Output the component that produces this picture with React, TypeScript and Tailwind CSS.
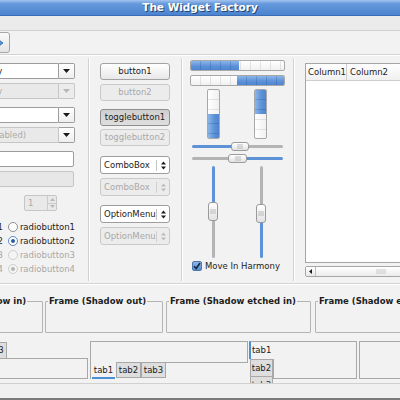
import React from 'react';

const dis = 'text-[#a9a9a9]';

function DownArrow({ c = '#1a1a1a' }: { c?: string }) {
  return (
    <svg width="7" height="4" viewBox="0 0 7 4">
      <path d="M0 0H7L3.5 4Z" fill={c} />
    </svg>
  );
}

function UpDown({ c = '#1a1a1a' }: { c?: string }) {
  return (
    <svg width="5" height="9" viewBox="0 0 5 9">
      <path d="M0 3.5H5L2.5 0.5Z M0 5.5H5L2.5 8.5Z" fill={c} />
    </svg>
  );
}

// combo with a separate arrow button (left column)
function EntryCombo({ text, off, arrowOff, pad }: { text: string; off?: boolean; arrowOff?: boolean; pad?: string }) {
  return (
    <div className="flex h-[16px]">
      <div
        className={`flex-1 flex items-center rounded-l-[2px] border ${pad ?? 'pl-[4px]'} ${
          off ? `bg-[#e9e9e9] border-[#c6c6c6] ${dis}` : 'bg-white border-[#9d9d9d]'
        }`}
      >
        {text}
      </div>
      <div
        className={`w-[16px] flex items-center justify-center rounded-r-[2px] border border-l-0 ${
          arrowOff ? 'bg-[#ececec] border-[#c6c6c6]' : 'bg-[linear-gradient(#ffffff,#eeeeee)] border-[#9d9d9d]'
        }`}
      >
        <DownArrow c={arrowOff ? '#b8b8b8' : '#1a1a1a'} />
      </div>
    </div>
  );
}

function Button({ text, off, pressed }: { text: string; off?: boolean; pressed?: boolean }) {
  let cls = 'border-[#a2a2a2] bg-[linear-gradient(#ffffff,#e8e8e8)]';
  if (off) cls = `border-[#cacaca] bg-[#ececec] ${dis}`;
  if (pressed) cls = 'border-[#8e8e8e] bg-[linear-gradient(#cfcfcf,#dedede)]';
  return (
    <div className={`h-[17px] rounded-[3px] border flex items-center justify-center ${cls}`}>{text}</div>
  );
}

function SpinCombo({ text, off }: { text: string; off?: boolean }) {
  return (
    <div
      className={`h-[18px] rounded-[3px] border flex items-center ${
        off ? `border-[#cacaca] bg-[#ececec] ${dis}` : 'border-[#9d9d9d] bg-white'
      }`}
    >
      <span className="flex-1 pl-[3px]">{text}</span>
      <div className={`w-px h-[11px] ${off ? 'bg-[#d0d0d0]' : 'bg-[#c4c4c4]'}`} />
      <div className="w-[12px] flex items-center justify-center">
        <UpDown c={off ? '#bbbbbb' : '#1a1a1a'} />
      </div>
    </div>
  );
}

function Radio({ on, off }: { on?: boolean; off?: boolean }) {
  return (
    <div
      className={`w-[10px] h-[10px] rounded-full border flex items-center justify-center ${
        off ? 'border-[#cfcfcf] bg-[#f4f4f4]' : on ? 'border-[#5b88c4] bg-white' : 'border-[#8e8e8e] bg-white'
      }`}
    >
      {on && <div className={`w-[4px] h-[4px] rounded-full ${off ? 'bg-[#b4b4b4]' : 'bg-[#2d5d9e]'}`} />}
    </div>
  );
}

function Thumb({ w, vertical }: { w: number; vertical?: boolean }) {
  return (
    <div
      className={`shrink-0 rounded-[3px] border border-[#9a9a9a] bg-[linear-gradient(#ffffff,#e2e2e2)] flex items-center justify-center ${
        vertical ? 'w-[10px]' : 'h-[9px]'
      }`}
      style={vertical ? { height: w } : { width: w }}
    >
      <div className="w-[6px] h-[5px] bg-[radial-gradient(#b5b5b5_0.6px,transparent_0.8px)] bg-[length:2px_2px]" />
    </div>
  );
}

function HScale({ left, thumb, blueLeft }: { left: number; thumb: number; blueLeft: boolean }) {
  return (
    <div className="h-[9px] ml-[2px] w-[91px] flex items-center">
      <div
        className={`h-[3px] rounded-l-full ${blueLeft ? 'bg-[#5d93d6]' : 'bg-[#b4b4b4]'}`}
        style={{ width: left }}
      />
      <Thumb w={thumb} />
      <div className={`flex-1 h-[3px] rounded-r-full ${blueLeft ? 'bg-[#b4b4b4]' : 'bg-[#5d93d6]'}`} />
    </div>
  );
}

function VScale({ top, blueTop }: { top: number; blueTop: boolean }) {
  return (
    <div className="w-[10px] h-[92px] flex flex-col items-center">
      <div className={`w-[3px] rounded-t-full ${blueTop ? 'bg-[#5d93d6]' : 'bg-[#b4b4b4]'}`} style={{ height: top }} />
      <Thumb w={19} vertical />
      <div className={`w-[3px] flex-1 rounded-b-full ${blueTop ? 'bg-[#b4b4b4]' : 'bg-[#5d93d6]'}`} />
    </div>
  );
}

const stripesH =
  'bg-[repeating-linear-gradient(90deg,transparent_0_9px,rgba(0,0,0,0.09)_9px_10px),linear-gradient(#ffffff,#f1f1f1)]';
const fillH =
  'bg-[repeating-linear-gradient(90deg,transparent_0_9px,rgba(0,40,120,0.18)_9px_10px),linear-gradient(#8cb6ea,#5a90d6_60%,#4f86d0)]';
const stripesV =
  'bg-[repeating-linear-gradient(180deg,transparent_0_9px,rgba(0,0,0,0.09)_9px_10px),linear-gradient(90deg,#ffffff,#f1f1f1)]';
const fillV =
  'bg-[repeating-linear-gradient(180deg,transparent_0_9px,rgba(0,40,120,0.18)_9px_10px),linear-gradient(90deg,#8cb6ea,#5a90d6_60%,#4f86d0)]';

function VSep() {
  return <div className="self-stretch my-[2px] w-[2px] border-l border-[#d2d2d2] bg-white shrink-0" />;
}

function Frame({ label, w, ml }: { label: string; w: number; ml?: string }) {
  return (
    <fieldset
      className={`h-[37px] shrink-0 border border-[#b4b4b4] rounded-[1px] ${ml ?? ''}`}
      style={{ width: w }}
    >
      <legend className="ml-[2px] px-[1px] font-bold leading-[10px]">{label}</legend>
    </fieldset>
  );
}

function Tab({ text, active }: { text: string; active?: boolean }) {
  return (
    <div
      className={`w-[25px] h-[16px] flex items-center justify-center ${
        active ? '' : 'bg-[#dedede] border border-[#a8a8a8]'
      }`}
    >
      {text}
    </div>
  );
}

export default function App() {
  return (
    <div className="w-[400px] h-[400px] overflow-hidden bg-[#f2f2f2] font-['DejaVu_Sans',sans-serif] text-[8.5px] leading-none text-[#1c1c1c] flex flex-col">
      {/* title bar */}
      <div className="h-[16px] shrink-0 flex items-center justify-center bg-[linear-gradient(#a3c4ef,#6699dc_25%,#4b83cf)] border-b border-[#3a6db5] text-white font-bold text-[10.5px] [text-shadow:1px_1px_0_#23446f]">
        The Widget Factory
      </div>

      {/* menubar */}
      <div className="h-[15px] shrink-0 bg-[#ebebeb] border-b border-[#d0d0d0]" />

      {/* toolbar */}
      <div className="h-[24px] shrink-0 flex items-center border-b border-[#d3d3d3]">
        <div className="-ml-[17px] w-[27px] h-[21px] rounded-[3px] border border-[#a6a6a6] bg-[linear-gradient(#fafafa,#e4e4e4)] flex items-center justify-center">
          <svg width="14" height="10" viewBox="0 0 14 10">
            <path d="M1 3.5H7V0.5L13 5L7 9.5V6.5H1Z" fill="#5b93d8" stroke="#2f63a8" strokeWidth="0.8" />
          </svg>
        </div>
      </div>
      <div className="h-px shrink-0 bg-white" />

      {/* main widgets */}
      <div className="h-[227px] shrink-0 flex">
        {/* column 1 */}
        <div className="-ml-[74px] w-[150px] shrink-0 pt-[7px] pl-[16px] pr-[1px] flex flex-col">
          <EntryCombo text="Combo entry" />
          <div className="mt-[4px]">
            <EntryCombo text="Combo entry" off arrowOff />
          </div>
          <div className="mt-[8px]">
            <EntryCombo text="" />
          </div>
          <div className="mt-[4px]">
            <EntryCombo text="Combo (disabled)" off pad="pl-[8px]" />
          </div>
          <div className="mt-[8px] mr-[1px] h-[16px] rounded-[2px] border border-[#9d9d9d] bg-white" />
          <div className="mt-[4px] mr-[1px] h-[16px] rounded-[2px] border border-[#c6c6c6] bg-[#e7e7e7]" />
          <div className="mt-[8px] ml-[82px] w-[33px] h-[16px] rounded-[2px] border border-[#c6c6c6] bg-[#e9e9e9] flex">
            <span className={`flex-1 pl-[3px] flex items-center ${dis}`}>1</span>
            <div className="w-[9px] border-l border-[#cccccc] flex flex-col">
              <div className="flex-1 flex items-center justify-center border-b border-[#cccccc]">
                <svg width="5" height="3" viewBox="0 0 5 3"><path d="M0 3H5L2.5 0Z" fill="#b8b8b8" /></svg>
              </div>
              <div className="flex-1 flex items-center justify-center">
                <svg width="5" height="3" viewBox="0 0 5 3"><path d="M0 0H5L2.5 3Z" fill="#b8b8b8" /></svg>
              </div>
            </div>
          </div>
          <div className="mt-[9px] -ml-[16px] flex flex-col">
            {[1, 2, 3, 4].map((n) => (
              <div key={n} className={`h-[14px] flex items-center ${n > 2 ? dis : ''}`}>
                <span className="w-[80px] text-right">checkbutton{n}</span>
                <div className="ml-[5px]">
                  <Radio on={n === 2 || n === 4} off={n > 2} />
                </div>
                <span className="ml-[2px]">radiobutton{n}</span>
              </div>
            ))}
          </div>
        </div>

        <div className="w-[12px] shrink-0" />
        <VSep />
        <div className="w-[10px] shrink-0" />

        {/* column 2 */}
        <div className="w-[70px] shrink-0 pt-[7px] flex flex-col">
          <Button text="button1" />
          <div className="mt-[4px]">
            <Button text="button2" off />
          </div>
          <div className="mt-[8px]">
            <Button text="togglebutton1" pressed />
          </div>
          <div className="mt-[3px]">
            <Button text="togglebutton2" off />
          </div>
          <div className="mt-[10px]">
            <SpinCombo text="ComboBox" />
          </div>
          <div className="mt-[4px]">
            <SpinCombo text="ComboBox" off />
          </div>
          <div className="mt-[9px]">
            <SpinCombo text="OptionMenu" />
          </div>
          <div className="mt-[4px]">
            <SpinCombo text="OptionMenu" off />
          </div>
        </div>

        <div className="w-[11px] shrink-0" />
        <VSep />
        <div className="w-[7px] shrink-0" />

        {/* column 3 */}
        <div className="w-[95px] shrink-0 pt-[4px] flex flex-col">
          <div className={`h-[11px] rounded-[2px] border border-[#a8a8a8] flex overflow-hidden ${stripesH}`}>
            <div className={`w-[48px] ${fillH}`} />
          </div>
          <div className={`mt-[4px] h-[11px] rounded-[2px] border border-[#a8a8a8] flex justify-end overflow-hidden ${stripesH}`}>
            <div className={`w-[47px] ${fillH}`} />
          </div>
          <div className="mt-[3px] h-[50px] flex">
            <div className={`ml-[17px] w-[13px] rounded-[2px] border border-[#a8a8a8] flex flex-col justify-end overflow-hidden ${stripesV}`}>
              <div className={`h-[24px] ${fillV}`} />
            </div>
            <div className={`ml-[34px] w-[13px] rounded-[2px] border border-[#a8a8a8] flex flex-col overflow-hidden ${stripesV}`}>
              <div className={`h-[24px] ${fillV}`} />
            </div>
          </div>
          <div className="mt-[3px]">
            <HScale left={39} thumb={18} blueLeft />
          </div>
          <div className="mt-[3px]">
            <HScale left={36} thumb={19} blueLeft={false} />
          </div>
          <div className="mt-[3px] flex">
            <div className="ml-[18px]">
              <VScale top={36} blueTop />
            </div>
            <div className="ml-[38px]">
              <VScale top={38} blueTop={false} />
            </div>
          </div>
          <div className="mt-[3px] h-[10px] flex items-center">
            <div className="ml-[2px] w-[10px] h-[10px] rounded-[2px] border border-[#4c77ad] bg-[linear-gradient(#8db4e6,#5a8dcf)] flex items-center justify-center">
              <svg width="8" height="8" viewBox="0 0 8 8">
                <path d="M1 4.2L3.2 6.5L7 1" fill="none" stroke="#15283f" strokeWidth="1.6" />
              </svg>
            </div>
            <span className="ml-[3px]">Move In Harmony</span>
          </div>
        </div>

        <div className="w-[8px] shrink-0" />
        <VSep />
        <div className="w-[10px] shrink-0" />

        {/* column 4 */}
        <div className="w-[130px] shrink-0 pt-[7px] flex flex-col">
          <div className="h-[200px] border border-[#a6a6a6] bg-white flex flex-col">
            <div className="h-[17px] flex border-b border-[#cdcdcd] bg-[linear-gradient(#ffffff,#f0f0f0)]">
              <div className="w-[41px] pl-[2px] flex items-center border-r border-[#cdcdcd]">Column1</div>
              <div className="pl-[3px] flex items-center">Column2</div>
            </div>
          </div>
          <div className="mt-[3px] h-[11px] rounded-[2px] border border-[#a6a6a6] bg-[#e6e6e6] flex">
            <div className="w-[10px] flex items-center justify-center border-r border-[#bdbdbd] bg-[linear-gradient(#ffffff,#e8e8e8)]">
              <svg width="3" height="5" viewBox="0 0 3 5"><path d="M3 0V5L0 2.5Z" fill="#1a1a1a" /></svg>
            </div>
            <div className="flex-1 bg-[linear-gradient(#ffffff,#ebebeb)] flex items-center">
              <div className="ml-[60px] w-[10px] h-[5px] bg-[radial-gradient(#c4c4c4_0.6px,transparent_0.8px)] bg-[length:2px_2px]" />
            </div>
          </div>
        </div>
      </div>

      {/* separator */}
      <div className="h-[2px] shrink-0 border-t border-[#d3d3d3] bg-white" />

      {/* frames */}
      <div className="h-[53px] shrink-0 pt-[11px] flex">
        <Frame label="Frame (Shadow in)" w={111} ml="-ml-[68px]" />
        <div className="w-[2px] shrink-0" />
        <Frame label="Frame (Shadow out)" w={118} />
        <div className="w-[3px] shrink-0" />
        <Frame label="Frame (Shadow etched in)" w={145} />
        <div className="w-[4px] shrink-0" />
        <Frame label="Frame (Shadow etched out)" w={150} />
      </div>

      {/* notebooks */}
      <div className="h-[45px] shrink-0 pt-[3px] flex overflow-hidden">
        {/* tabs on top */}
        <div className="-ml-[69px] w-[157px] shrink-0 flex flex-col">
          <div className="h-[17px] shrink-0 flex items-end pl-[1px]">
            <div className="w-[25px] h-[17px] flex items-center justify-center border-t border-x border-[#a8a8a8]">tab1</div>
            <div className="w-[25px] h-[16px] flex items-center justify-center bg-[#dedede] border-t border-r border-[#a8a8a8]">tab2</div>
            <div className="w-[25px] h-[16px] flex items-center justify-center bg-[#dedede] border-t border-r border-[#a8a8a8]">tab3</div>
          </div>
          <div className="h-[21px] shrink-0 border border-[#a8a8a8]" />
        </div>
        <div className="w-[2px] shrink-0" />

        {/* tabs on bottom */}
        <div className="w-[158px] shrink-0 flex flex-col">
          <div className="h-[21px] shrink-0 border-t border-x border-[#a8a8a8]" />
          <div className="h-[17px] shrink-0 flex">
            <div className="w-[26px] h-[17px] border-l border-[#a8a8a8] flex flex-col">
              <div className="flex-1 flex items-center justify-center pt-[1px]">tab1</div>
              <div className="h-[2px] mx-[1px] bg-[#4a90d9]" />
            </div>
            <Tab text="tab2" />
            <Tab text="tab3" />
            <div className="flex-1 border-t border-r border-[#a8a8a8] h-[1px]" />
          </div>
        </div>
        <div className="w-[1px] shrink-0" />

        {/* tabs on left */}
        <div className="w-[108px] shrink-0 flex items-start">
          <div className="w-[24px] shrink-0 flex flex-col">
            <div className="h-[18px] shrink-0 border-t border-[#a8a8a8] border-l-2 border-l-[#4a90d9] flex items-center pl-[1px]">tab1</div>
            <div className="ml-[1px] h-[18px] shrink-0 bg-[#dedede] border border-[#a8a8a8] flex items-center justify-center">tab2</div>
            <div className="ml-[1px] h-[18px] shrink-0 bg-[#dedede] border border-t-0 border-[#a8a8a8] flex items-center justify-center">tab3</div>
          </div>
          <div className="flex-1 h-[38px] border border-l-0 border-[#a8a8a8] flex">
            <div className="w-px mt-[17px] bg-[#a8a8a8]" />
          </div>
        </div>
        <div className="w-[2px] shrink-0" />

        {/* tabs on right */}
        <div className="w-[60px] h-[38px] shrink-0 border border-[#a8a8a8]" />
      </div>

      {/* bottom */}
      <div className="h-[17px] shrink-0 border-t border-[#d0d0d0] border-b-2 border-b-[#7a7a7a] bg-[#f0f0f0]" />
    </div>
  );
}
